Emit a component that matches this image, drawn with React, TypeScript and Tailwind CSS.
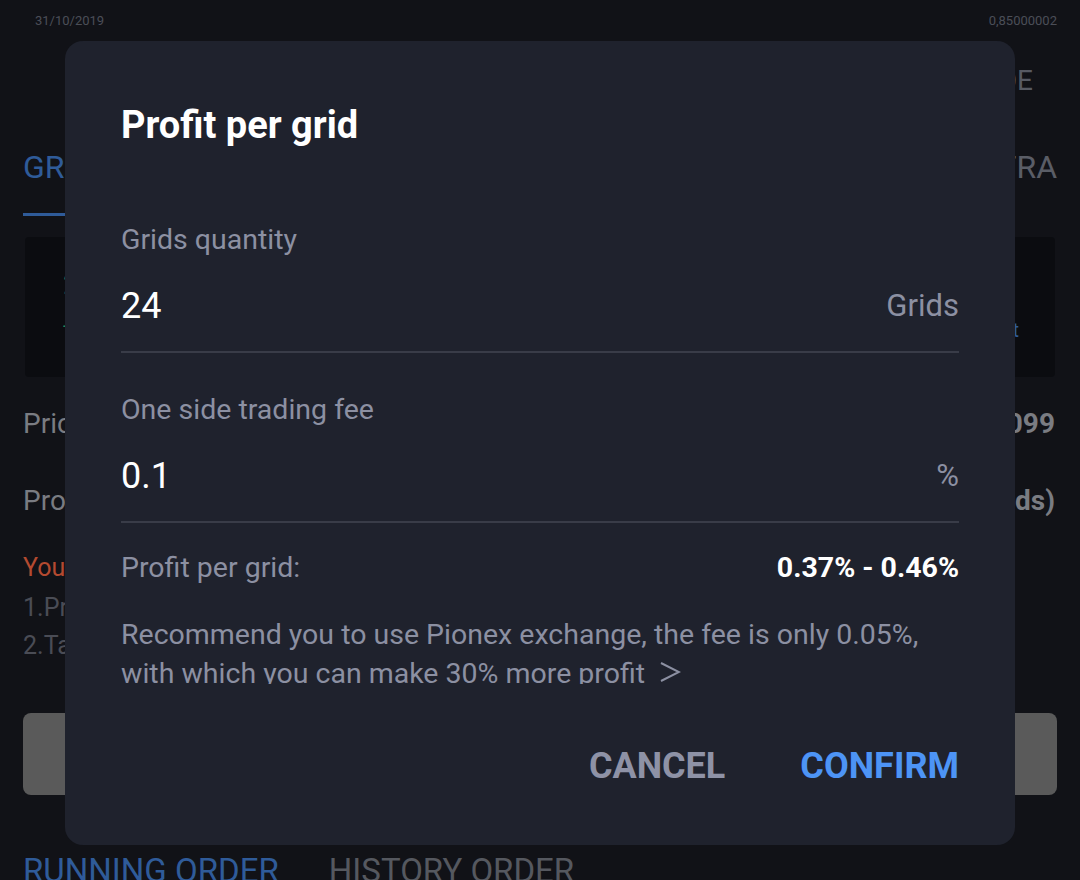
import React from 'react';

function BackgroundPage() {
  return (
    <div className="flex flex-col">
      <div className="flex h-[42px] items-center justify-between pl-[35px] pr-[23px] text-[13px] text-[#4b4e57]">
        <span>31/10/2019</span>
        <span>0,85000002</span>
      </div>
      <div className="flex h-[78px] items-center justify-end pr-[47px] text-[28px] text-[#575a63]">
        <span>TRADE</span>
      </div>
      <div className="flex h-[96px] flex-col justify-between px-[23px] pt-[27px]">
        <div className="flex items-center justify-between text-[32px] leading-[40px]">
          <span className="text-[#2f5b99]">GRID</span>
          <span className="text-[#5a5d66]">EXTRA</span>
        </div>
        <div className="h-[3px] w-[120px] bg-[#2f5b99]" />
      </div>
      <div className="mx-[25px] mt-[21px] flex h-[140px] justify-between rounded-[4px] bg-[#0b0c10] py-[30px] pl-[38px] pr-[36px]">
        <div className="flex flex-col gap-[10px] text-[#1f8a5a]">
          <span className="text-[30px] leading-[34px]">24.05</span>
          <span className="text-[20px] leading-[28px]">-7.12%</span>
        </div>
        <div className="flex items-end pb-[2px] text-[20px] text-[#2f5b99]">Edit</div>
      </div>
      <div className="mt-[27px] flex h-[40px] items-center justify-between px-[25px] text-[28px] text-[#7a7c82]">
        <span className="-ml-[2px]">Price range</span>
        <span className="font-bold">0.80 - 0.9099</span>
      </div>
      <div className="mt-[37px] flex h-[40px] items-center justify-between px-[25px] text-[28px] text-[#7a7c82]">
        <span className="-ml-[2px]">Profit per grid</span>
        <span className="font-bold">0.37% (24 Grids)</span>
      </div>
      <div className="mt-[26px] flex flex-col px-[23px] text-[25px]">
        <span className="leading-[42px] text-[#b44a30]">You need to know</span>
        <span className="leading-[38px] text-[#4a4c55]">1.Price out of range</span>
        <span className="leading-[38px] text-[#4a4c55]">2.Take profit</span>
      </div>
      <div className="mx-[23px] mt-[48px] h-[82px] rounded-[8px] bg-[#5a5a5a]" />
      <div className="mt-[56px] flex gap-[50px] px-[23px] text-[33px] leading-[40px]">
        <span className="text-[#2f5b99]">RUNNING ORDER</span>
        <span className="text-[#55585f]">HISTORY ORDER</span>
      </div>
    </div>
  );
}

function Field({ label, value, unit }: { label: string; value: string; unit: string }) {
  return (
    <div className="flex flex-col">
      <span className="text-[28.5px] leading-[32px] text-[#8c90a2]">{label}</span>
      <div className="mt-[30px] flex items-center justify-between">
        <span className="text-[36px] leading-[40px] text-white">{value}</span>
        <span className="text-[31px] leading-[40px] text-[#8c90a2]">{unit}</span>
      </div>
      <div className="mt-[25px] h-[2px] bg-[#393c48]" />
    </div>
  );
}

function ProfitDialog() {
  return (
    <div className="mx-[65px] mt-[41px] flex h-[804px] flex-col rounded-[18px] bg-[#1f222d] px-[56px] pt-[62px] pb-[59px]">
      <h2 className="text-[38px] font-bold leading-[44px] text-white">Profit per grid</h2>
      <div className="mt-[77px]">
        <Field label="Grids quantity" value="24" unit="Grids" />
      </div>
      <div className="mt-[41px]">
        <Field label="One side trading fee" value="0.1" unit="%" />
      </div>
      <div className="h-[161px] overflow-hidden">
        <div className="mt-[29px] flex items-center justify-between text-[28.5px] leading-[32px]">
          <span className="text-[#8c90a2]">Profit per grid:</span>
          <span className="font-bold text-white">0.37% - 0.46%</span>
        </div>
        <p className="mt-[31px] text-[28.5px] leading-[39px] text-[#8c90a2]">
          Recommend you to use Pionex exchange, the fee is only 0.05%, with which you can make 30% more profit
          <svg className="ml-[14px] inline-block align-baseline" width="22" height="22" viewBox="0 0 22 22" fill="none">
            <path d="M2 2 L20 11 L2 20" stroke="#8c90a2" strokeWidth="2" strokeLinejoin="miter" />
          </svg>
        </p>
      </div>
      <div className="mt-auto flex items-center justify-end gap-[75px] text-[36px] font-bold leading-[40px]">
        <button className="text-[#8e92a6]">CANCEL</button>
        <button className="text-[#4d94f5]">CONFIRM</button>
      </div>
    </div>
  );
}

export default function App() {
  return (
    <div className="relative h-[880px] w-[1080px] overflow-hidden bg-[#111217] font-['Roboto',sans-serif]">
      <BackgroundPage />
      <div className="absolute inset-0">
        <ProfitDialog />
      </div>
    </div>
  );
}
